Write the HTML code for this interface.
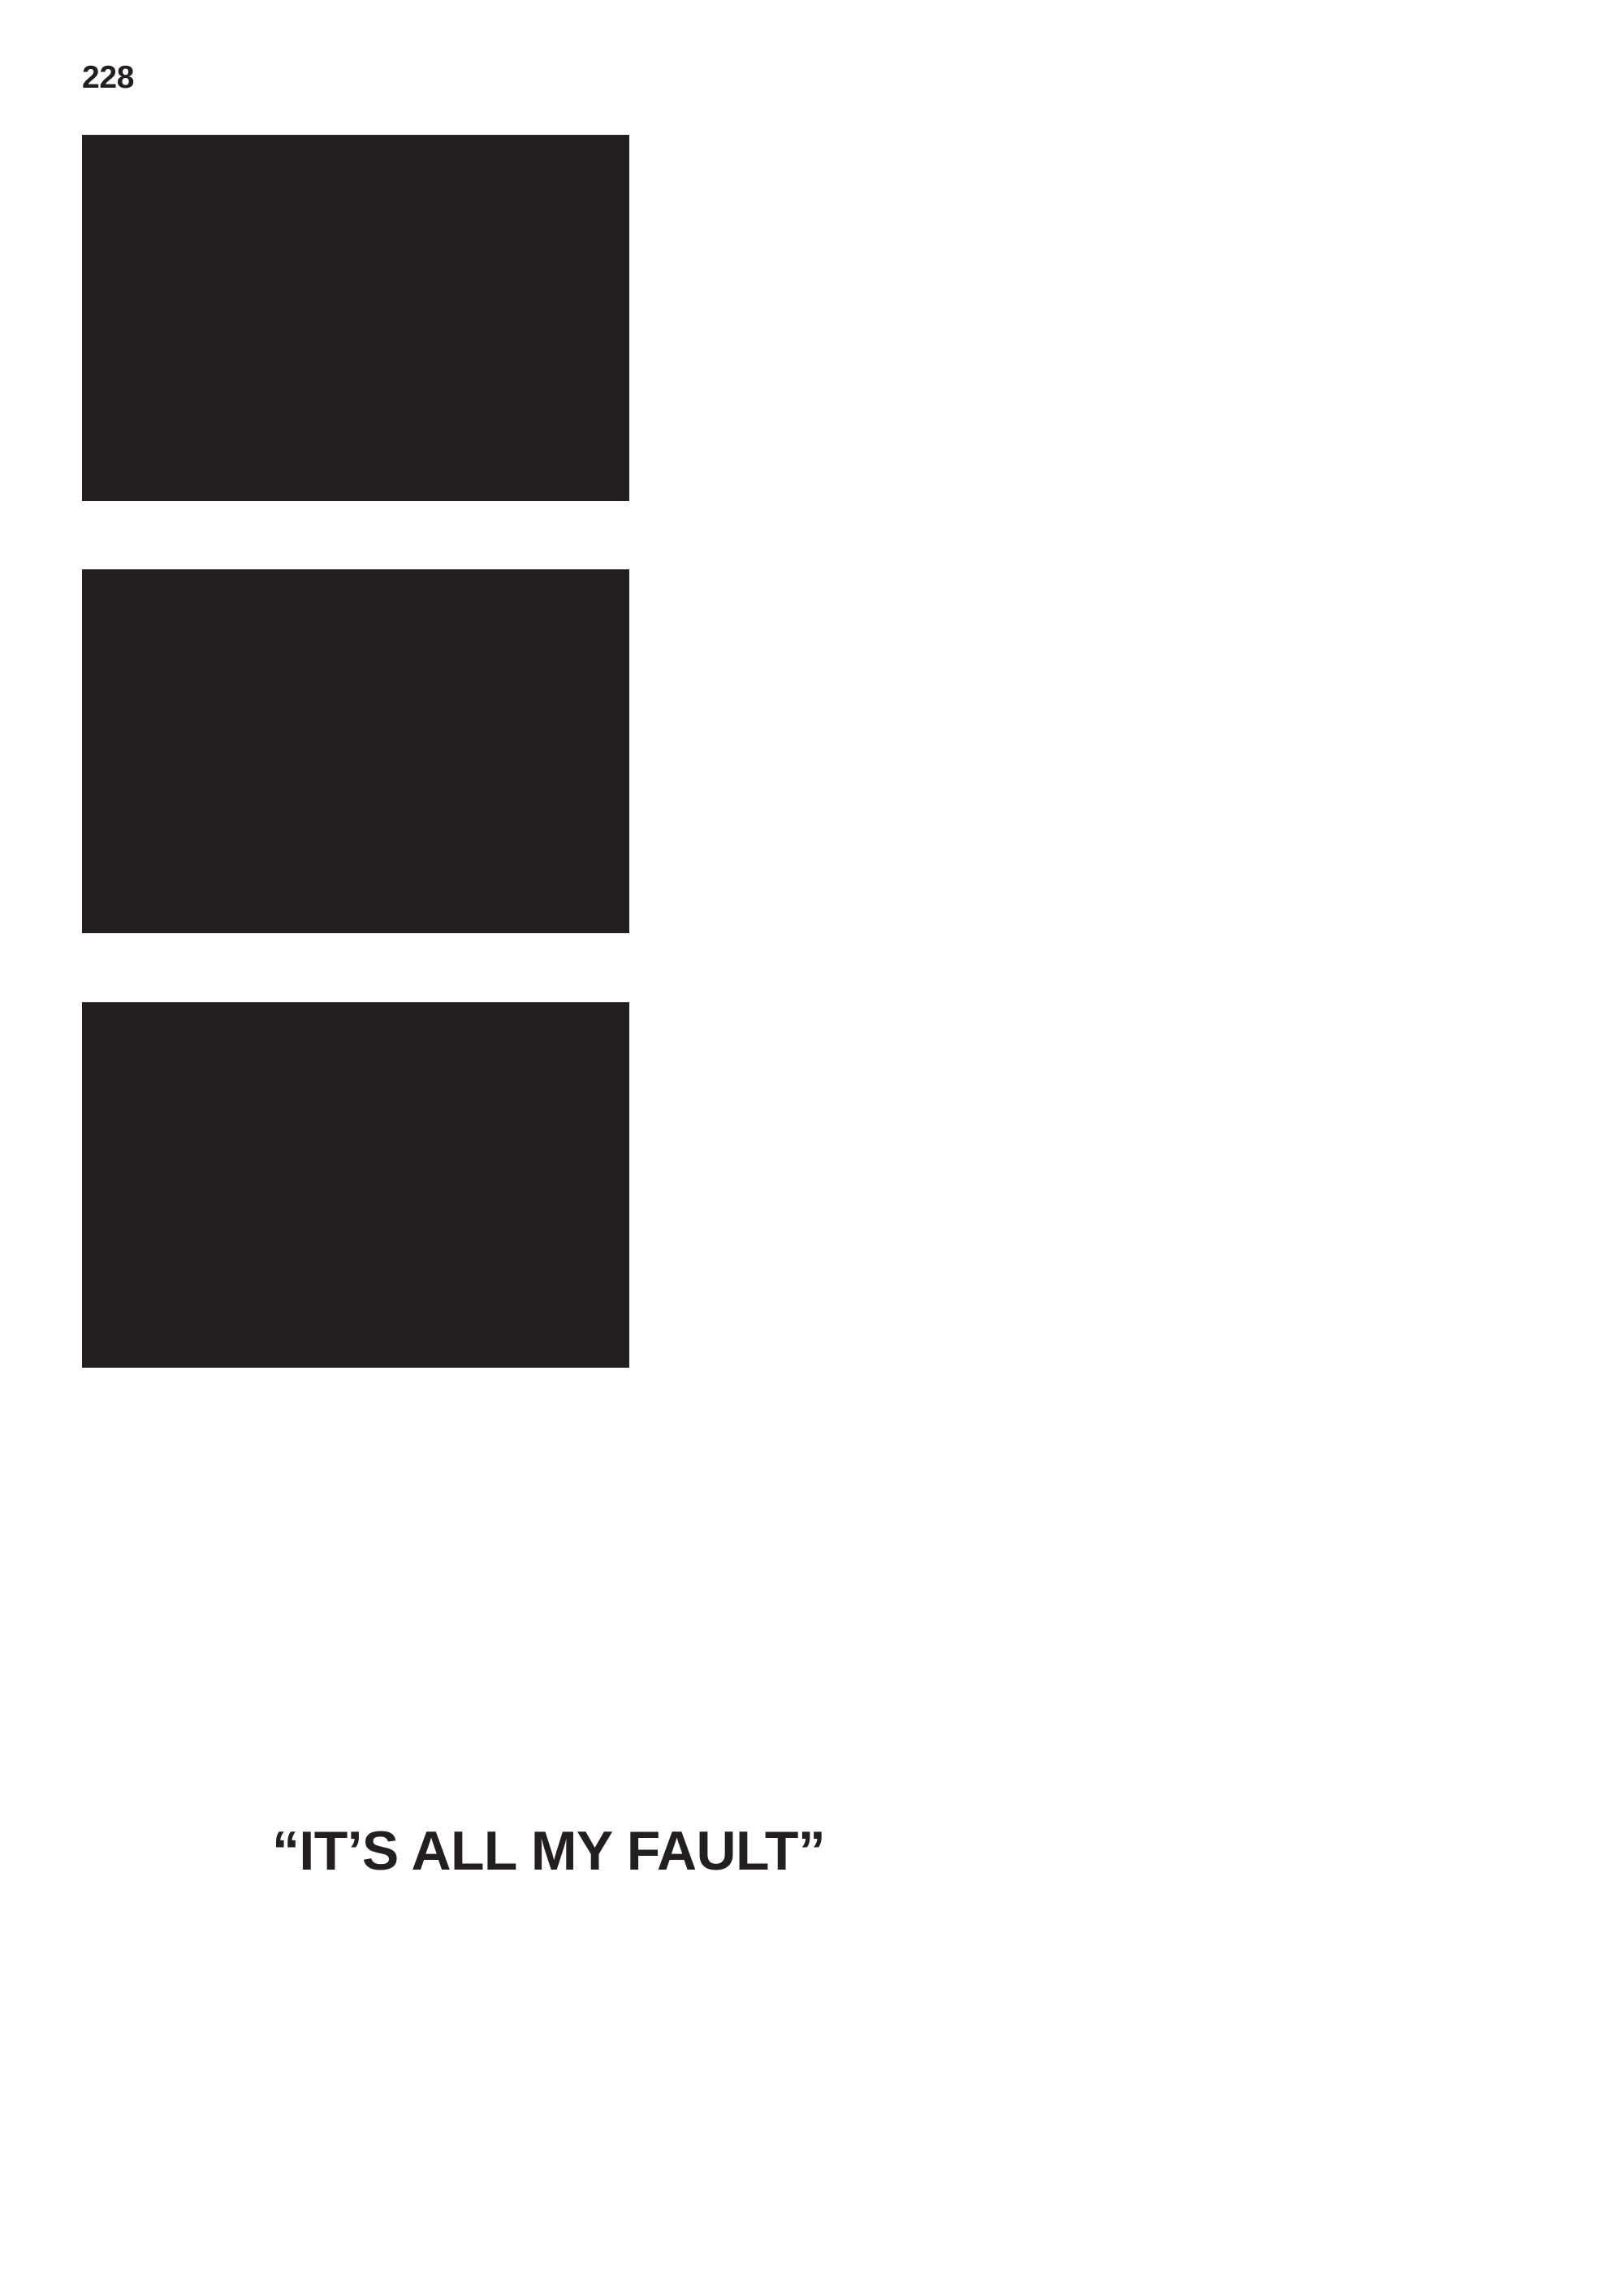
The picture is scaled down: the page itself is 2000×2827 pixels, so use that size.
<!DOCTYPE html>
<html><head><meta charset="utf-8"><style>
html,body{margin:0;padding:0;background:#fff;}
body{width:2000px;height:2827px;position:relative;overflow:hidden;font-family:"Liberation Sans",Arial,sans-serif;color:#231f20;}
.r{position:absolute;left:101px;width:674px;background:#231f20;}
.pn{position:absolute;left:101px;top:74px;font-size:39px;font-weight:bold;line-height:44px;letter-spacing:-0.3px;}
.q{position:absolute;left:335px;top:2241px;font-size:68px;font-weight:bold;line-height:76px;letter-spacing:-0.6px;white-space:nowrap;}
</style></head><body>
<div class="pn">228</div>
<div class="r" style="top:166px;height:451px"></div>
<div class="r" style="top:701px;height:448px"></div>
<div class="r" style="top:1234px;height:450px"></div>
<div class="q">“IT’S ALL MY FAULT”</div>
</body></html>
